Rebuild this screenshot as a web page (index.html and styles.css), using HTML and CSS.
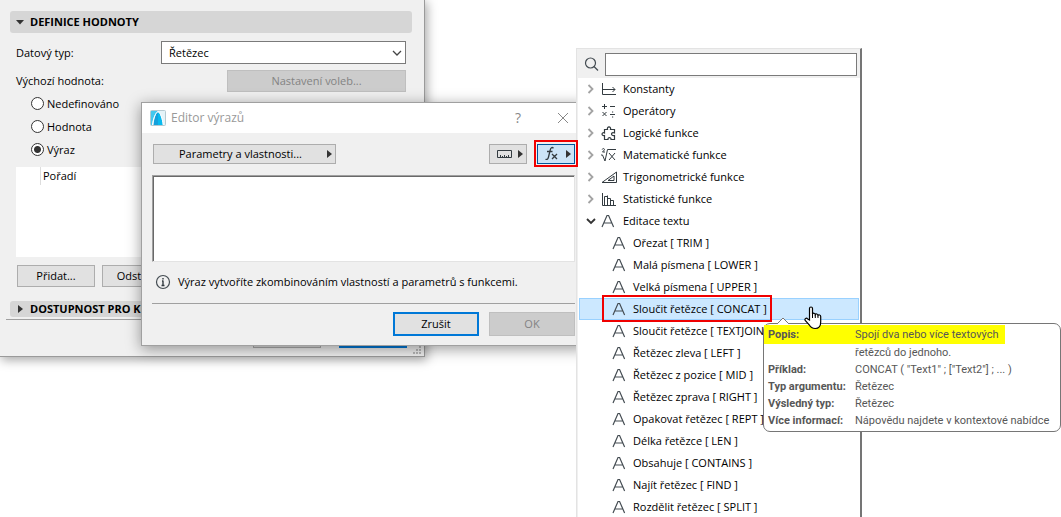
FILE: index.html
```html
<!DOCTYPE html>
<html lang="cs">
<head>
    <meta charset="UTF-8">
    <meta name="viewport" content="width=device-width, initial-scale=1.0">
    <title>Editor výrazů</title>
    <link rel="stylesheet" href="styles.css">
</head>
<body>
    <svg class="defs" aria-hidden="true">
        <symbol id="letter" viewBox="0 0 14 14">
            <path d="M1 13L6 1.5h1.6L12.600 13M3.200 9h7.200" fill="none" stroke="#444c52" stroke-width="1.2"/>
        </symbol>
        <symbol id="closed" viewBox="0 0 8 10">
            <path d="M1.500 1L5.500 5l-4 4" fill="none" stroke="#a3a3a3" stroke-width="1.8"/>
        </symbol>
        <symbol id="right" viewBox="0 0 5 8">
            <path d="M0 0l5 4-5 4z" fill="#333"/>
        </symbol>
    </svg>

    <main class="desktop">
        <section class="window panel">
            <h2 class="section-title">
                <svg width="8" height="5"><path d="M0 0h8L4 4.500z" fill="#333"/></svg>
                DEFINICE HODNOTY
            </h2>
            <div class="field">
                <label for="dataType">Datový typ:</label>
                <div class="select">
                    <select id="dataType"><option>Řetězec</option></select>
                    <svg width="10" height="6"><path d="M1 1l4 4 4-4" fill="none" stroke="#444" stroke-width="1.3"/></svg>
                </div>
            </div>
            <div class="field default-field">
                <span>Výchozí hodnota:</span>
                <button class="btn options" disabled>Nastavení voleb...</button>
            </div>
            <div class="radios">
                <label><input type="radio" name="def"> Nedefinováno</label>
                <label><input type="radio" name="def"> Hodnota</label>
                <label><input type="radio" name="def" checked> Výraz</label>
            </div>
            <div class="list"><span class="column">Pořadí</span></div>
            <div class="list-buttons">
                <button class="btn">Přidat...</button>
                <button class="btn">Odstranit</button>
            </div>
            <h2 class="section-title small">
                <svg width="5" height="8"><use href="#right"/></svg>
                DOSTUPNOST PRO KLASIFIKACE
            </h2>
            <div class="panel-footer">
                <button class="btn" aria-label="Zrušit"></button>
                <button class="btn primary" aria-label="OK"></button>
            </div>
            <svg class="grip" width="9" height="9"><path d="M6 0h2v2h-2zM3 3h2v2h-2zM6 3h2v2h-2zM0 6h2v2h-2zM3 6h2v2h-2zM6 6h2v2h-2z" fill="#b8b8b8"/></svg>
        </section>

        <section class="window dialog">
            <header class="titlebar">
                <svg width="16" height="16" viewBox="0 0 16 16">
                    <rect x=".5" y=".5" width="15" height="15" rx="1" fill="#e4f3f8" stroke="#b5c9d0"/>
                    <path d="M1 1h7C5 3 3 8 2 15H1z" fill="#45c8ee"/>
                    <path d="M8 2C5.500 3 4 9 3.500 15H8z" fill="#15a0dc"/>
                    <path d="M8 2c2.500 1 4 7 5 13H8z" fill="#08b9ee"/>
                    <path d="M2.500 15C3.500 8 5.500 3 8 1.500c2.500 1.500 4.500 7 5.200 13.500" fill="none" stroke="#fff"/>
                </svg>
                <h1>Editor výrazů</h1>
                <button class="icon-btn" aria-label="Nápověda">?</button>
                <button class="icon-btn" aria-label="Zavřít">
                    <svg width="12" height="12"><path d="M1 1l10 10M11 1L1 11" stroke="#888"/></svg>
                </button>
            </header>
            <div class="dialog-body">
                <div class="toolbar">
                    <button class="btn params"><span>Parametry a vlastnosti...</span><svg width="5" height="8"><use href="#right"/></svg></button>
                    <button class="btn tool" aria-label="Jednotky">
                        <svg width="16" height="9"><path d="M.5.5h14v7H.5zM3.500 8V5M5.500 8V6M7.500 8V5M9.500 8V6M11.500 8V5" fill="none" stroke="#333b40"/></svg>
                        <svg width="5" height="8"><use href="#right"/></svg>
                    </button>
                    <button class="btn tool active" aria-label="Funkce">
                        <svg width="14" height="16" viewBox="0 0 14 16"><path d="M8.500 2.200C7 .8 5.700 1.700 5.200 4L3.500 11c-.5 2.200-1.500 2.800-3 2.300M2 5.500h5.500M7 8l5 5M12 8l-5 5" fill="none" stroke="#333b40" stroke-width="1.3"/></svg>
                        <svg width="5" height="8"><use href="#right"/></svg>
                    </button>
                </div>
                <textarea class="expression" aria-label="Výraz"></textarea>
                <p class="info">
                    <svg width="16" height="16"><circle cx="8" cy="8" r="6.500" fill="none" stroke="#444c52" stroke-width="1.2"/><path d="M8 4v1.500M8 7v5M7 7h1.500M6.500 11.500h3" stroke="#333b40" stroke-width="1.400"/></svg>
                    Výraz vytvoříte zkombinováním vlastností a parametrů s funkcemi.
                </p>
                <div class="dialog-footer">
                    <button class="btn primary">Zrušit</button>
                    <button class="btn" disabled>OK</button>
                </div>
            </div>
        </section>

        <section class="popup">
            <div class="search">
                <svg width="15" height="15"><circle cx="6.500" cy="6" r="5" fill="none" stroke="#444c52" stroke-width="1.2"/><path d="M10 9.500l4 4" stroke="#444c52" stroke-width="1.2"/></svg>
                <input type="text" aria-label="Hledat">
            </div>
            <ul class="tree">
                <li>
                    <svg width="8" height="10"><use href="#closed"/></svg>
                    <svg width="16" height="16"><path d="M1.500 2v11.500H15M1.500 8.500H14M11.500 6L14 8.500 11.500 11" fill="none" stroke="#333b40"/></svg>
                    Konstanty
                </li>
                <li>
                    <svg width="8" height="10"><use href="#closed"/></svg>
                    <svg width="16" height="16"><path d="M1 3.500h5M3.500 1v5M9 3.500h5M1.500 9l4 4M5.500 9l-4 4M9 11.500h5M11 9h1.200M11 14h1.200" fill="none" stroke="#333b40"/></svg>
                    Operátory
                </li>
                <li>
                    <svg width="8" height="10"><use href="#closed"/></svg>
                    <svg width="16" height="16"><path d="M3.500 4.500h3C5.500 1 10.500 1 9.500 4.500h4V8c-4-1.500-4 3.500 0 2.500v4H10c.5-2.500-3.500-2.500-3 0H3.500v-4C.2 11.500.2 6.500 3.500 8z" fill="none" stroke="#333b40" stroke-width="1.2"/></svg>
                    Logické funkce
                </li>
                <li>
                    <svg width="8" height="10"><use href="#closed"/></svg>
                    <svg width="16" height="16"><path d="M0 8h1.500L4 14 6.500 2.500H15M8 6l6 7M14 6l-6 7M1.200 2.500C1.500 1 4 1.300 3.300 3L1.500 5H4" fill="none" stroke="#333b40"/></svg>
                    Matematické funkce
                </li>
                <li>
                    <svg width="8" height="10"><use href="#closed"/></svg>
                    <svg width="16" height="16"><path d="M1 13.500L15.500 3v10.500zM7 11.500l6-4.500v4.500z" fill="none" stroke="#333b40"/></svg>
                    Trigonometrické funkce
                </li>
                <li>
                    <svg width="8" height="10"><use href="#closed"/></svg>
                    <svg width="16" height="16"><path d="M1.500 2v12.500H15M3.500 14V5.500h3V14M6.500 4.500V14M6.500 7.500h3V14M9.500 9.500h3V14" fill="none" stroke="#333b40"/></svg>
                    Statistické funkce
                </li>
                <li>
                    <svg width="10" height="8"><path d="M1 2l4 4 4-4" fill="none" stroke="#333" stroke-width="1.8"/></svg>
                    <svg width="16" height="14"><use href="#letter" width="14" height="14"/></svg>
                    Editace textu
                </li>
                <li class="child"><svg width="14" height="14"><use href="#letter"/></svg>Ořezat [ TRIM ]</li>
                <li class="child"><svg width="14" height="14"><use href="#letter"/></svg>Malá písmena [ LOWER ]</li>
                <li class="child"><svg width="14" height="14"><use href="#letter"/></svg>Velká písmena [ UPPER ]</li>
                <li class="child selected"><svg width="14" height="14"><use href="#letter"/></svg>Sloučit řetězce [ CONCAT ]</li>
                <li class="child"><svg width="14" height="14"><use href="#letter"/></svg>Sloučit řetězce [ TEXTJOIN</li>
                <li class="child"><svg width="14" height="14"><use href="#letter"/></svg>Řetězec zleva [ LEFT ]</li>
                <li class="child"><svg width="14" height="14"><use href="#letter"/></svg>Řetězec z pozice [ MID ]</li>
                <li class="child"><svg width="14" height="14"><use href="#letter"/></svg>Řetězec zprava [ RIGHT ]</li>
                <li class="child"><svg width="14" height="14"><use href="#letter"/></svg>Opakovat řetězec [ REPT ]</li>
                <li class="child"><svg width="14" height="14"><use href="#letter"/></svg>Délka řetězce [ LEN ]</li>
                <li class="child"><svg width="14" height="14"><use href="#letter"/></svg>Obsahuje [ CONTAINS ]</li>
                <li class="child"><svg width="14" height="14"><use href="#letter"/></svg>Najít řetězec [ FIND ]</li>
                <li class="child"><svg width="14" height="14"><use href="#letter"/></svg>Rozdělit řetězec [ SPLIT ]</li>
            </ul>
        </section>

        <div class="mark mark-fx"></div>
        <div class="mark mark-concat"></div>

        <div class="tooltip">
            <svg class="arrow" width="14" height="8"><path d="M1 7l6-6 6 6v1H1z" fill="#fff"/><path d="M1 7l6-6 6 6" fill="none" stroke="#767676"/></svg>
            <table>
                <tr class="highlight"><th>Popis:</th><td><span>Spojí dva nebo více textových</span></td></tr>
                <tr><th></th><td>řetězců do jednoho.</td></tr>
                <tr><th>Příklad:</th><td>CONCAT ( "Text1" ; ["Text2"] ; ... )</td></tr>
                <tr><th>Typ argumentu:</th><td>Řetězec</td></tr>
                <tr><th>Výsledný typ:</th><td>Řetězec</td></tr>
                <tr><th>Více informací:</th><td>Nápovědu najdete v kontextové nabídce</td></tr>
            </table>
        </div>

        <svg class="cursor" width="18" height="24" viewBox="0 0 18 24">
            <path d="M5.500 14V2.500c0-2 3-2 3 0V8c.5-1.200 2.700-1 2.800.5.600-1 2.600-.7 2.700.8.700-.8 2.700-.5 2.700 1.200V16c0 4-2 6.500-5.500 6.500-3 0-4.700-1.200-6-3.700L1.200 14.500c-1-2 1.300-3 2.500-1.500z" fill="#fff" stroke="#000" stroke-width="1.2"/>
            <path d="M8.500 8v4M11.300 8.500V12M14 9.500V12" stroke="#000"/>
        </svg>
    </main>
</body>
</html>
```

FILE: styles.css
```css
* {
    box-sizing: border-box;
}
body {
    margin: 0;
    background: #fff;
    color: #000;
    font: 11px/16px "Open Sans", "Noto Sans", sans-serif;
}
h1, h2, p, ul {
    margin: 0;
    padding: 0;
    font-size: 11px;
}
button, input, select, textarea {
    font: inherit;
    color: inherit;
}
svg {
    flex: none;
}
.defs {
    position: absolute;
    width: 0;
    height: 0;
}
.desktop {
    position: relative;
    height: 100vh;
    overflow: hidden;
}

/* windows */
.window {
    position: absolute;
    background: #f0f0f0;
    border: 1px solid #9a9a9a;
}
.panel {
    left: -1px;
    top: -1px;
    width: 426px;
    padding: 11px 12px 8px 10px;
    box-shadow: 2px 3px 10px rgba(0, 0, 0, 0.35);
}
.dialog {
    left: 141px;
    top: 102px;
    width: 446px;
    border-color: #a0a0a0;
    box-shadow: 0 3px 14px rgba(0, 0, 0, 0.4);
}

/* buttons */
.btn {
    height: 22px;
    padding: 0;
    background: #e1e1e1;
    border: 1px solid #adadad;
}
.btn.primary {
    border: 2px solid #0078d7;
}
.btn:disabled {
    background: #ccc;
    border-color: #bfbfbf;
    color: #838383;
}

/* panel with the definition */
.section-title {
    display: flex;
    align-items: center;
    gap: 6px;
    height: 22px;
    padding-left: 6px;
    background: #d6d6d6;
    border-radius: 3px;
    white-space: nowrap;
    overflow: hidden;
}
.section-title.small {
    height: 16px;
    margin-top: 14px;
    padding-left: 8px;
    gap: 7px;
}
.field {
    display: flex;
    justify-content: space-between;
    align-items: center;
    margin-top: 8px;
    padding: 0 6px;
}
.default-field {
    margin-top: 6px;
}
.select {
    display: flex;
    align-items: center;
    width: 245px;
}
.select select {
    appearance: none;
    width: 100%;
    height: 23px;
    padding: 0 7px;
    background: #fff;
    border: 1px solid #7a7a7a;
    border-radius: 0;
}
.select svg {
    margin-left: -14px;
    pointer-events: none;
}
.options {
    width: 179px;
}
.radios {
    padding-left: 21px;
}
.radios label {
    display: flex;
    align-items: center;
    gap: 3px;
    height: 23px;
}
.radios input {
    appearance: none;
    width: 13px;
    height: 13px;
    margin: 0;
    background: #fff;
    border: 1px solid #333;
    border-radius: 50%;
}
.radios input:checked {
    background: radial-gradient(circle, #333 3px, #fff 4px);
}
.list {
    height: 90px;
    margin: 6px 6px 0;
    padding-left: 24px;
    background: #fff;
}
.column {
    display: inline-block;
    height: 18px;
    padding-left: 2px;
    line-height: 18px;
    border-left: 1px solid #ddd;
}
.list-buttons {
    display: flex;
    gap: 7px;
    margin-top: 8px;
    padding-left: 7px;
}
.list-buttons .btn {
    width: 78px;
}
.panel-footer {
    display: flex;
    justify-content: flex-end;
    gap: 18px;
    margin: 2px 0 0 -4px;
    padding: 6px 5px 0 0;
    border-top: 1px solid #a0a0a0;
}
.panel-footer .btn {
    width: 68px;
}
.grip {
    position: absolute;
    right: 2px;
    bottom: 1px;
}

/* expression editor */
.titlebar {
    display: flex;
    align-items: center;
    height: 30px;
    padding: 0 15px 0 8px;
    background: #fff;
}
.titlebar h1 {
    flex: 1;
    margin-left: 5px;
    color: #999;
    font-size: 12px;
    font-weight: normal;
}
.icon-btn {
    display: flex;
    width: 14px;
    margin-left: 28px;
    padding: 0;
    background: none;
    border: 0;
    color: #888;
    font-size: 14px;
}
.dialog-body {
    padding: 11px 11px 9px 10px;
}
.toolbar {
    display: flex;
    gap: 10px;
}
.toolbar .btn {
    display: flex;
    align-items: center;
    height: 20px;
}
.params {
    width: 183px;
    margin: 0 auto 0 1px;
    padding-right: 3px;
}
.params span {
    flex: 1;
}
.tool {
    width: 38px;
    padding: 0 3px 0 7px;
    justify-content: space-between;
}
.tool.active {
    background: #cce4f7;
    border-color: #005499;
}
.expression {
    display: block;
    width: 100%;
    height: 87px;
    margin-top: 11px;
    background: #fff;
    border: 1px solid #e3e3e3;
    border-top-color: #a0a0a0;
    border-left-color: #a0a0a0;
    box-shadow: inset 1px 1px #696969;
    resize: none;
}
.info {
    display: flex;
    align-items: center;
    gap: 7px;
    height: 41px;
    padding: 0 0 2px 3px;
    white-space: nowrap;
}
.dialog-footer {
    display: flex;
    justify-content: flex-end;
    gap: 10px;
    padding-top: 8px;
    border-top: 1px solid #a0a0a0;
}
.dialog-footer .btn {
    width: 86px;
    height: 24px;
}

/* list of functions */
.popup {
    position: absolute;
    left: 576px;
    top: 48px;
    bottom: 0;
    width: 286px;
    overflow: hidden;
    background: #fff;
    border: 1px solid #e3e3e3;
    border-right: 2px solid #757575;
    border-bottom: 0;
}
.search {
    display: flex;
    align-items: center;
    gap: 6px;
    height: 29px;
    padding: 1px 3px 0 7px;
    background: #f0f0f0;
}
.search input {
    flex: 1;
    min-width: 0;
    height: 23px;
    background: #fff;
    border: 1px solid #7a7a7a;
}
.tree {
    padding: 0 1px;
    border-left: 1px solid #f0f0f0;
    list-style: none;
}
.tree li {
    display: flex;
    align-items: center;
    height: 22px;
    padding-left: 6px;
    border: 1px solid transparent;
    white-space: nowrap;
}
.tree svg:first-child {
    width: 10px;
}
.tree svg:nth-child(2) {
    width: 16px;
    margin: 0 6px 0 5px;
}
.tree .child {
    padding-left: 32px;
}
.tree .child svg {
    width: 14px;
    margin-right: 7px;
}
.tree .selected {
    background: #cce8ff;
    border-color: #99d1ff;
}

/* red frames */
.mark {
    position: absolute;
    height: 27px;
    border: 2px solid #f00000;
}
.mark-fx {
    left: 534px;
    top: 140px;
    width: 44px;
}
.mark-concat {
    left: 602px;
    top: 295px;
    width: 170px;
}

/* help bubble */
.tooltip {
    position: absolute;
    left: 763px;
    top: 323px;
    width: 298px;
    padding: 1px 0 2px;
    background: #fff;
    border: 1px solid #767676;
    border-radius: 7px;
    color: #575757;
    font-family: Roboto, "Open Sans", sans-serif;
}
.tooltip .arrow {
    position: absolute;
    left: 12px;
    top: -7px;
}
.tooltip table {
    width: 100%;
    border-collapse: collapse;
    table-layout: fixed;
}
.tooltip th, .tooltip td {
    height: 17px;
    padding: 0;
    line-height: 17px;
    text-align: left;
    white-space: nowrap;
}
.tooltip th {
    width: 91px;
    padding-left: 4px;
}
.tooltip .highlight th, .tooltip .highlight span {
    height: 19px;
    line-height: 19px;
    background: #ff0;
}
.highlight span {
    display: block;
    width: 150px;
}
.cursor {
    position: absolute;
    left: 804px;
    top: 306px;
}
```
